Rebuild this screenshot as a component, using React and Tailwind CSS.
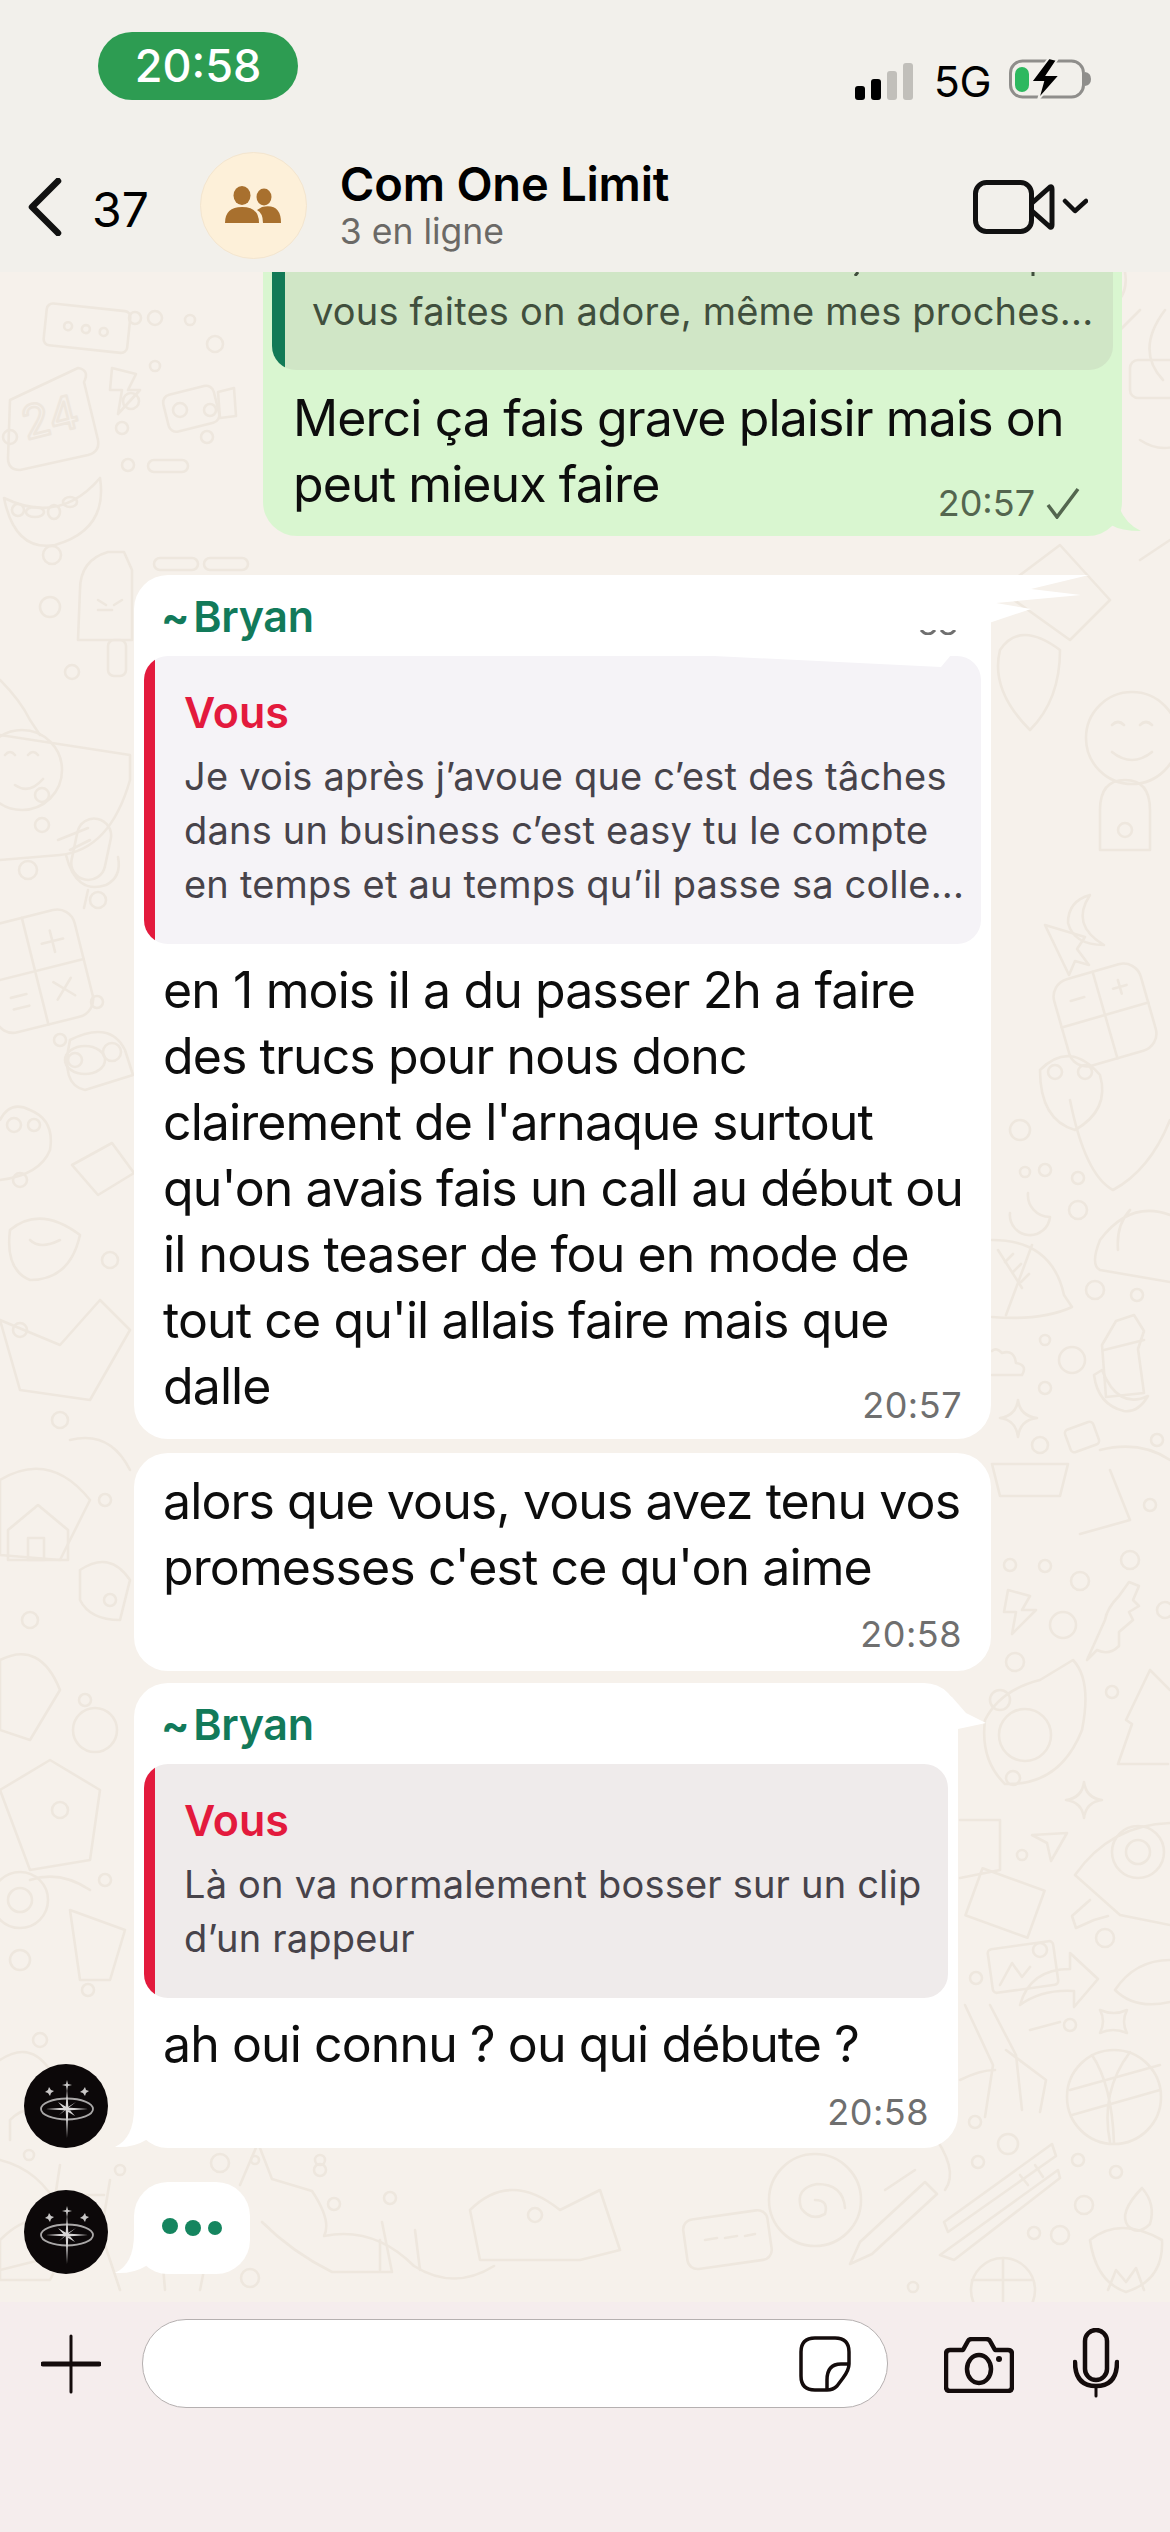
import React from 'react'

const FONT = "font-['Inter','Liberation_Sans',sans-serif]"

// tiny filler circles of the wallpaper, page coordinates
const dots = [
  [135, 318, 6], [155, 318, 7], [215, 344, 8], [190, 320, 5], [155, 366, 5], [128, 465, 6], [131, 401, 8], [122, 428, 6],
  [180, 410, 7], [210, 410, 6], [207, 437, 6], [10, 437, 7], [52, 555, 9], [18, 510, 6], [72, 672, 7], [50, 607, 10],
  [42, 825, 7], [42, 795, 7], [98, 900, 8], [97, 1002, 6], [60, 1040, 6], [28, 870, 9], [112, 1052, 9], [75, 1060, 7],
  [1020, 1130, 10], [1045, 1170, 6], [1025, 1172, 5], [1078, 1178, 6], [1078, 1210, 9], [1095, 1290, 9], [1137, 1295, 6],
  [1045, 1340, 5], [1072, 1360, 13], [1045, 1388, 6], [1040, 1445, 8], [1157, 1440, 6], [1010, 1565, 6], [1045, 1566, 6],
  [1080, 1581, 9], [1063, 1625, 13], [1015, 1662, 9], [1112, 1692, 6], [1000, 1700, 10], [1013, 1778, 7], [1022, 1855, 5],
  [1105, 1938, 9], [976, 1978, 6], [1070, 2025, 6], [975, 2122, 6], [1008, 2144, 10], [978, 2162, 6], [1078, 2160, 6],
  [1116, 2172, 6], [1084, 2205, 9], [1034, 2233, 6], [1060, 2235, 9], [913, 2287, 5], [120, 2170, 5], [29, 2155, 5],
  [320, 2160, 5], [220, 2163, 9], [255, 2160, 4], [320, 2170, 6], [334, 2204, 6], [250, 2278, 9], [390, 2198, 6], [535, 2215, 7],
  [1150, 1505, 6], [1130, 1560, 9], [1165, 1610, 8], [20, 1330, 7], [60, 1420, 8], [105, 1500, 6], [30, 1620, 8], [85, 1700, 6],
  [60, 1810, 8], [105, 1880, 6], [20, 1960, 10], [88, 1990, 6], [40, 2040, 7], [110, 1600, 6], [20, 1180, 7], [110, 1260, 8],
]

function Wallpaper() {
  return (
    <svg className="absolute inset-0 w-full h-full" viewBox="0 272 1170 2030" fill="none" stroke="#eee7de" strokeWidth="2.6" strokeLinejoin="round" strokeLinecap="round">
      {dots.map(([x, y, r], i) => <circle key={i} cx={x} cy={y} r={r} />)}
      {/* left column */}
      <g transform="rotate(6 85 328)"><rect x="45" y="307" width="84" height="42" rx="6" /><circle cx="68" cy="328" r="4" /><circle cx="86" cy="329" r="4" /><circle cx="104" cy="330" r="4" /></g>
      <path d="M10 400 L78 368 Q90 370 84 382 L98 440 Q100 452 88 455 L20 470 Q8 470 8 458z" />
      <text x="22" y="435" fontSize="46" fontFamily="Inter" fill="#f6f1eb" transform="rotate(-14 45 420)">24</text>
      <path d="M112 368l24 6-8 16 12 0-22 24 4-24-12 0z" />
      <rect x="165" y="390" width="52" height="38" rx="8" transform="rotate(-14 190 408)" /><path d="M218 392l16-4 2 28-16 2z" />
      <path d="M4 498 Q60 525 100 478 Q108 530 55 545 Q15 552 4 498z" /><ellipse cx="35" cy="512" rx="9" ry="5" /><ellipse cx="54" cy="512" rx="6" ry="7" /><ellipse cx="70" cy="502" rx="7" ry="5" />
      <rect x="148" y="460" width="40" height="12" rx="6" /><rect x="154" y="558" width="44" height="12" rx="6" /><rect x="204" y="558" width="44" height="12" rx="6" />
      <path d="M80 590 Q80 560 108 552 L124 552 L132 570 L132 640 L78 640z" /><rect x="108" y="640" width="18" height="36" rx="6" /><path d="M98 610h14M98 600l8 5M122 600l-8 5" />
      <path d="M0 680 Q20 700 30 720 L40 735 M0 735 L130 755 L130 780 Q110 850 60 855 L0 860" />
      <circle cx="22" cy="770" r="40" /><path d="M5 755q5-6 10 0M28 755q5-6 10 0M15 785q14 10 28-6" />
      <path d="M58 840l30-12M70 850l20-10" />
      <rect x="74" y="818" width="34" height="62" rx="17" transform="rotate(12 90 850)" /><path d="M66 855q10 40 40 30q16-8 12-28M88 890l-4 18" />
      <g transform="rotate(-14 40 970)"><rect x="-15" y="915" width="100" height="110" rx="18" /><path d="M35 915v110M-15 970h100M48 945h22M59 934v22M50 985l18 18M68 985l-18 18M5 990h16M5 1002h16" /></g>
      <ellipse cx="85" cy="1060" rx="20" ry="14" /><path d="M70 1040 Q110 1020 125 1050 L133 1075 L85 1090 Q60 1085 70 1040z" />
      <path d="M0 1120 Q10 1100 30 1110 Q55 1120 50 1150 Q40 1175 0 1180" /><circle cx="14" cy="1125" r="7" /><circle cx="34" cy="1125" r="6" />
      <path d="M72 1165l40-22 22 30-36 22z" />
      <path d="M10 1230 Q40 1205 80 1235 Q70 1280 30 1280 Q5 1270 10 1230z" /><path d="M30 1240q10 10 30 0" />
      <path d="M0 1320 L60 1345 L100 1300 L130 1330 L90 1400 L20 1390z" />
      <path d="M0 1480 Q50 1450 90 1500 L60 1560 L0 1555z" /><path d="M70 1440 Q110 1430 130 1470" />
      <path d="M8 1530l30-25 30 25v30h-60z" /><rect x="28" y="1538" width="16" height="22" />
      <path d="M80 1570q30-20 50 10l-10 40q-30 0-40-20z" />
      <path d="M0 1660 Q40 1640 60 1690 L30 1740 L0 1730z" /><circle cx="95" cy="1730" r="22" />
      <path d="M0 1790 L50 1760 L100 1790 L90 1860 L30 1870z" /><path d="M30 1880q30-10 60 10" />
      <circle cx="20" cy="1900" r="28" /><circle cx="20" cy="1900" r="12" /><path d="M70 1910 L125 1930 L110 1980 L80 1980z" />
      <path d="M0 2060 Q30 2040 50 2070 M10 2140l0-20q20-20 40 0" /><path d="M0 2160q40 10 60 50l-20 50-40 10" />
      {/* fox and friends under the typing bubble */}
      <path d="M240 2185l18-42 14 36 40 12q20 30 12 45q50-10 90 30q40 25 80 0" /><path d="M262 2222q30 30 70 50h60l-10-50M420 2270l-5-40M380 2270l0-30" />
      <path d="M60 2165l-10 65 50 10 10-60M60 2195h44" />
      <path d="M0 2240q40-40 70 0l-20 40h-50z" /><path d="M120 2290l-20-60M165 2290l-5-60M200 2290l10-50" />
      <rect x="685" y="2215" width="85" height="50" rx="10" transform="rotate(-8 725 2240)" /><path d="M705 2240l12-2M725 2238l12-2M745 2236l10-2" />
      <circle cx="815" cy="2200" r="46" /><path d="M815 2200q14 0 10 14q-14 8-24-6q-6-20 16-24q26 0 28 24" />
      <path d="M925 2182l-65 60-10 22 22-10 65-60z" /><path d="M470 2210 Q510 2170 560 2210 L600 2190 L620 2250 L580 2260 L480 2260z" />
      {/* right column, top */}
      <path d="M1125 272q5 30-25 40M1140 310l-30 30M1165 310q-30 40-2 70" />
      <circle cx="1025" cy="338" r="9" /><rect x="1130" y="360" width="70" height="38" rx="8" /><path d="M1140 440q30 20 60-10" />
      <path d="M1140 560 L1170 540 M1000 590 L1060 545 L1110 600 L1070 640z" />
      <path d="M1000 650 Q1020 620 1060 650 Q1060 700 1030 730 Q990 690 1000 650z" /><circle cx="1132" cy="738" r="46" /><path d="M1112 725q6-6 12 0M1140 725q6-6 12 0M1112 752q20 16 40 0" />
      <path d="M1100 810q0-30 25-30q25 0 25 30v40h-50z" /><circle cx="1125" cy="830" r="7" />
      <path d="M1045 925l40 12-8 12 12 16-14-4-6 14z" /><path d="M1090 895q-20 30 14 50q-30 0-36-22q0-22 22-28z" />
      <g transform="rotate(-16 1105 1015)"><rect x="1060" y="970" width="90" height="90" rx="18" /><path d="M1105 970v90M1060 1015h90M1076 992h14M1120 992h14M1127 985v14" /></g>
      <path d="M1040 1070 Q1070 1040 1100 1075 Q1110 1110 1075 1130 Q1040 1120 1040 1070z" /><circle cx="1055" cy="1072" r="7" /><circle cx="1085" cy="1072" r="7" />
      {/* right column, middle */}
      <path d="M1070 1100 Q1085 1175 1113 1190 Q1150 1170 1170 1120" />
      <path d="M1010 1205a20 20 0 1 0 40 4a22 22 0 0 1-22-24" transform="translate(0 8)" />
      <path d="M992 1240q60 0 72 55l8 12q-30 14-80 10M998 1250l24 38M1032 1245l-26 70" /><path d="M1005 1262l8-8M1013 1272l8-8M1021 1282l8-8" />
      <path d="M1170 1215q-40-15-70 25q-10 25 0 30l70 12M1130 1210q-14 15-12 40" />
      <path d="M992 1375h30q6-10-6-12q-2-14-14-10q-6-6-10-2" />
      <path d="M1102 1345l14-24 18-6 10 16-6 18 6 44-38 4z" /><path d="M1104 1350l40-10" />
      <path d="M1094 1375q4 30 30 36q14 2 24-15q-30 14-46-26z" />
      <path d="M1018 1400q2 16 19 18q-17 2-19 19q-2-17-18-19q16-2 18-18z" />
      <rect x="1067" y="1425" width="30" height="24" rx="4" transform="rotate(-20 1082 1437)" />
      <path d="M992 1464h76l-8 32h-60zM1110 1470l20 50-50 14" /><path d="M1100 1450q40-10 70 10" />
      <path d="M1008 1590l22 6-8 14 14 0-24 24 4-22-12 0z" />
      <path d="M1087 1660l18-40q2-12 14-24l10-14 10 4-6 14 6 6-10 6 4 8-14 12 0 14q-10 10-22 4z" />
      <path d="M1073 1660 Q1092 1680 1082 1730 Q1060 1786 1005 1784 Q980 1760 985 1720 Q1000 1690 1040 1680z" /><circle cx="1025" cy="1735" r="26" />
      <path d="M1150 1670l20 20M1150 1670l-24 50 6 4-14 40 50 0" />
      <path d="M1084 1782q2 16 18 18q-16 2-18 18q-2-16-18-18q16-2 18-18z" />
      <path d="M1075 1875 Q1110 1825 1170 1823 M1170 1925 L1120 1915 L1075 1875" /><circle cx="1138" cy="1852" r="26" /><circle cx="1138" cy="1852" r="12" /><path d="M1090 1900l-18 16 4 12 18-8 14-4" />
      <path d="M960 1820h40l0 50-40 8" /><path d="M1032 1835l35-2-16 28-4-18z" />
      <rect x="972" y="1878" width="66" height="50" transform="rotate(20 1005 1903)" /><rect x="990" y="1945" width="66" height="44" rx="4" transform="rotate(-8 1023 1967)" /><circle cx="1040" cy="1950" r="7" /><path d="M1000 1985l12-22 10 14 8-10" />
      <path d="M1020 2005q10-36 50-36l0-16 28 26-24 28 0-16q-32-2-54 14z" />
      <path d="M1115 1990q20-30 55-30M1115 1990q20 20 55 12" />
      <path d="M1100 2010q14 6 27 0q-6 12 0 23q-14-6-27 0q6-12 0-23z" />
      <path d="M965 2005l28 60-8 52M990 2005l26 50 6 55M1006 2050l40 30-6 32M1030 2030l30-8" /><path d="M960 2080q20-10 35-10" />
      <circle cx="1114" cy="2097" r="47" /><path d="M1070 2090l90-25M1072 2115l88-25M1092 2055q20 30 22 88M1130 2052q-30 40-20 90" />
      <path d="M940 2255l118-85 2 8-106 82zM948 2232l108-76 -4-12-108 78z" /><path d="M1020 2175l8 10M1035 2165l8 12" />
      <path d="M1090 2240q30-24 72 0q2 40-36 52q-30-10-36-52z" /><path d="M1142 2188q-24 25-14 38q10 10 22-2q6-20-8-36z" /><path d="M1108 2290l8-20 10 12 10-14 8 22" />
      <circle cx="1003" cy="2290" r="32" /><path d="M972 2280h60M1003 2258v60" />
      <path d="M930 2130 Q960 2170 945 2190M915 2170l-30 20" />
    </svg>
  )
}

function Tail({ className, fill = 'white', d }) {
  return (
    <svg className={`absolute ${className}`} viewBox="0 0 40 40" fill={fill}><path d={d} /></svg>
  )
}

function Reply({ text, bg, height }) {
  return (
    <div className={`flex overflow-hidden rounded-[24px] ${bg} ${height}`}>
      <div className="w-[11px] bg-[#e31a3d] shrink-0"></div>
      <div className="pl-[29px] pt-[29px]">
        <div className="text-[43px] leading-[54px] font-semibold text-[#e31a3d]">Vous</div>
        <div className="mt-[10px] text-[38px] leading-[54px] tracking-[0.2px] text-[#47434a] whitespace-nowrap">{text}</div>
      </div>
    </div>
  )
}

function Name() {
  return <div className="pl-[27px] h-[62px] text-[43px] leading-[44px] font-semibold tracking-[-0.3px] text-[#127a5a]"><span className="text-[42px] font-bold mr-[4px]">~</span>Bryan</div>
}

function Time({ children }) {
  return <span className="text-[36px] leading-[40px] tracking-[0.5px] text-[#6f6f6f]">{children}</span>
}

function Avatar() {
  return (
    <svg className="w-[84px] h-[84px] shrink-0" viewBox="0 0 84 84" fill="none">
      <circle cx="42" cy="42" r="42" fill="#0c0809" />
      <ellipse cx="43" cy="45" rx="26" ry="10.5" stroke="#a9a7a7" strokeWidth="1.8" />
      <path d="M43 24l1.4 20 -1.4 30 -1.4-30zM22 45l21-1.6 21 1.6-21 1.6zM34 38l10 6 7 8-10-6zM52 38l-9 7-8 6 9-8z" fill="#d8d6d6" />
      <path d="M43 16l1 4 4 1-4 1-1 5-1-5-4-1 4-1zM25 23l2 3 3 1-3 2-1 3-2-3-3-1 3-2zM61 23l1 3 3 1-3 2-1 3-2-3-3-1 3-2z" fill="#c9c7c7" />
    </svg>
  )
}

function Bubble({ avatar, width, className = '', children, tail }) {
  return (
    <div className="flex items-end pl-[24px]">
      {avatar ? <Avatar /> : <div className="w-[84px] shrink-0"></div>}
      <div className={`relative ml-[26px] ${width} bg-white rounded-[34px] ${className}`}>
        {tail && <Tail className="-left-[19px] bottom-0 w-[40px] h-[40px]" d="M19 0 Q19 30 0 39 Q18 40 31 32 L40 10z" />}
        {children}
      </div>
    </div>
  )
}

const BODY = 'text-[50px] leading-[66px] tracking-[-0.9px] text-[#0d0d0d] whitespace-nowrap'

export default function App() {
  return (
    <div className={`w-[1170px] h-[2532px] flex flex-col overflow-hidden text-black ${FONT}`}>
      {/* status bar and conversation header */}
      <header className="h-[272px] shrink-0 bg-[#f2f0eb] flex flex-col">
        <div className="h-[140px] flex items-start pl-[98px] pr-[77px]">
          <div className="mt-[32px] w-[200px] h-[68px] rounded-[34px] bg-[#2d9c52] text-white text-[45px] font-medium flex items-center justify-center">20:58</div>
          <div className="ml-auto mt-[58px] flex items-end">
            <div className="flex items-end gap-[6px] h-[38px]">
              <div className="w-[10px] h-[14px] rounded-[3px] bg-black"></div>
              <div className="w-[10px] h-[21px] rounded-[3px] bg-black"></div>
              <div className="w-[10px] h-[29px] rounded-[3px] bg-[#c1bfba]"></div>
              <div className="w-[10px] h-[37px] rounded-[3px] bg-[#c1bfba]"></div>
            </div>
            <span className="ml-[21px] text-[43px] leading-[38px] tracking-[-0.5px]">5G</span>
            <svg className="ml-[18px] w-[84px] h-[42px]" viewBox="0 0 84 42" fill="none">
              <rect x="1.5" y="3" width="73" height="36" rx="12" stroke="#8f8e8b" strokeWidth="3" />
              <rect x="6" y="9" width="14" height="25" rx="7" fill="#2db85f" />
              <path d="M76 14q6 1 6 7t-6 7z" fill="#8f8e8b" />
              <path d="M40 0 L22 24 L34 24 L29 42 L51 17 L38 17 L48 2z" fill="black" stroke="#f2f0eb" strokeWidth="2" />
            </svg>
          </div>
        </div>
        <div className="h-[132px] flex items-start pl-[28px] pr-[82px]">
          <svg className="mt-[38px] w-[34px] h-[58px]" viewBox="0 0 34 58" fill="none" stroke="#111" strokeWidth="6.5" strokeLinecap="round" strokeLinejoin="round"><path d="M30 3 L4 29 L30 55" /></svg>
          <span className="ml-[30px] mt-[41px] text-[48px] leading-[58px]">37</span>
          <div className="ml-[51px] mt-[12px] w-[107px] h-[107px] rounded-full bg-[#fdf0d9] border border-[#f3e5cf] flex items-center justify-center">
            <svg className="w-[56px] h-[38px] mb-[2px]" viewBox="0 0 56 38" fill="#a8702e">
              <ellipse cx="39" cy="11" rx="7.5" ry="8.5" /><path d="M37 21q19-4 19 16H38q0-10-6-13z" />
              <ellipse cx="17" cy="9.5" rx="8.5" ry="9.5" /><path d="M0 37q0-16 17-16t17 16z" />
            </svg>
          </div>
          <div className="ml-[33px] mt-[18px]">
            <div className="text-[47px] leading-[52px] font-semibold tracking-[-0.2px]">Com One Limit</div>
            <div className="text-[35.5px] leading-[44px] text-[#6b6966]">3 en ligne</div>
          </div>
          <svg className="ml-auto mt-[40px] w-[115px] h-[54px]" viewBox="0 0 115 54" fill="none" stroke="#111" strokeLinejoin="round" strokeLinecap="round">
            <rect x="2.5" y="2.5" width="56" height="49" rx="11" strokeWidth="5" />
            <path d="M59 23 L77 7 Q79 6 79 9 V45 Q79 48 77 47 L59 31" strokeWidth="5" />
            <path d="M92 21 L102 31 L113 21" strokeWidth="4.5" />
          </svg>
        </div>
      </header>

      {/* messages */}
      <main className="relative flex-1 bg-[#f6f1eb] overflow-hidden">
        <Wallpaper />
        <div className="relative flex flex-col">
          {/* outgoing */}
          <div className="relative self-end mr-[48px] w-[859px] h-[264px] bg-[#d9f6d0] rounded-b-[34px] px-[9px]">
            <Tail className="-right-[19px] bottom-0 w-[40px] h-[50px]" fill="#d9f6d0" d="M0 0 L14 0 Q18 30 40 40 Q20 40 10 34 Q4 40 0 40z" />
            <div className="flex h-[98px] rounded-b-[24px] overflow-hidden bg-[#d0e6c6]">
              <div className="w-[13px] bg-[#127a56] shrink-0"></div>
              <div className="relative pl-[27px] pt-[12px] text-[38px] leading-[54px] tracking-[0.2px] text-[#404f3d] whitespace-nowrap">
                vous faites on adore, même mes proches...
                <svg className="absolute top-0 left-[0px] w-[800px] h-[4px]" viewBox="0 0 800 4" stroke="#404f3d" strokeWidth="3"><path d="M570 4l3-4M748 0v4" /></svg>
              </div>
            </div>
            <div className={`pl-[21px] pr-[14px] pt-[15px] ${BODY}`}>
              Merci ça fais grave plaisir mais on
              <div className="flex items-end justify-between">
                <span>peut mieux faire</span>
                <span className="flex items-center gap-[10px] mb-[-6px] mr-[18px] tracking-normal">
                  <span className="text-[36px] leading-[40px] text-[#54664f]">20:57</span>
                  <svg className="w-[36px] h-[32px]" viewBox="0 0 36 32" fill="none" stroke="#54664f" strokeWidth="3.5"><path d="M3 18 L12 30 L33 2" /></svg>
                </span>
              </div>
            </div>
          </div>

          {/* first quoted reply */}
          <div className="mt-[39px]">
            <Bubble width="w-[857px]" className="h-[864px] pt-[19px]">
              <Name />
              <div className="px-[10px]">
                <Reply bg="bg-[#f5f3f7]" height="h-[288px]" text={<>Je vois après j’avoue que c’est des tâches<br />dans un business c’est easy tu le compte<br />en temps et au temps qu’il passe sa colle...</>} />
              </div>
              <div className={`pl-[29px] pt-[13px] ${BODY}`}>
                en 1 mois il a du passer 2h a faire<br />
                des trucs pour nous donc<br />
                clairement de l'arnaque surtout<br />
                qu'on avais fais un call au début ou<br />
                il nous teaser de fou en mode de<br />
                tout ce qu'il allais faire mais que<br />
                dalle
              </div>
              <div className="flex justify-end pr-[29px] -mt-[34px]"><Time>20:57</Time></div>
              {/* retouched smear across the corner */}
              <svg className="absolute -right-[100px] top-0 w-[460px] h-[95px]" viewBox="0 0 460 95" fill="white">
                <path d="M100 0 L458 0 L400 14 L450 20 L365 28 L400 34 L358 48 L358 56 L100 62z" />
                <path d="M63 80 L320 80 L310 92z" />
              </svg>
              <div className="absolute right-[32px] top-[55px] w-[40px] h-[5px] text-[#6f6f6f] overflow-hidden">
                <svg viewBox="0 0 40 5" fill="none" stroke="currentColor" strokeWidth="3"><path d="M2 0q7 8 14 0M22 0q7 8 14 0" /></svg>
              </div>
            </Bubble>
          </div>

          {/* second message */}
          <div className="mt-[14px]">
            <Bubble width="w-[857px]" className="h-[218px] pt-[15px]">
              <div className={`pl-[29px] ${BODY}`}>
                alors que vous, vous avez tenu vos<br />
                promesses c'est ce qu'on aime
              </div>
              <div className="flex justify-end pr-[29px] mt-[14px]"><Time>20:58</Time></div>
            </Bubble>
          </div>

          {/* last quoted reply */}
          <div className="mt-[12px]">
            <Bubble avatar tail width="w-[824px]" className="h-[465px] pt-[19px]">
              <Name />
              <div className="px-[10px] pt-[18px]"></div>
              <div className="px-[10px] -mt-[18px]">
                <Reply bg="bg-[#efebeb]" height="h-[234px]" text={<>Là on va normalement bosser sur un clip<br />d’un rappeur</>} />
              </div>
              <div className={`pl-[29px] pt-[13px] ${BODY}`}>ah oui connu ? ou qui débute ?</div>
              <div className="flex justify-end pr-[29px] mt-[15px]"><Time>20:58</Time></div>
              <svg className="absolute -right-[64px] top-0 w-[100px] h-[62px]" viewBox="0 0 100 62" fill="white"><path d="M0 0 L30 14 L44 30 L64 40 L36 46 L34 54 L0 60z" /></svg>
            </Bubble>
          </div>

          {/* typing */}
          <div className="mt-[34px]">
            <Bubble avatar tail width="w-[116px]" className="h-[92px] flex items-center justify-center gap-[7px]">
              <div className="w-[16px] h-[16px] rounded-full bg-[#15855f] -mt-[4px]"></div>
              <div className="w-[16px] h-[16px] rounded-full bg-[#15855f]"></div>
              <div className="w-[14px] h-[14px] rounded-full bg-[#15855f]"></div>
            </Bubble>
          </div>
        </div>
      </main>

      {/* composer */}
      <footer className="h-[230px] shrink-0 bg-[#f5eded] flex items-start pl-[41px]">
        <svg className="mt-[32px] w-[60px] h-[60px]" viewBox="0 0 60 60" fill="none" stroke="#140c0c" strokeLinecap="round"><path d="M30 2v56" strokeWidth="3" /><path d="M2 30h56" strokeWidth="5" /></svg>
        <div className="ml-[41px] mt-[17px] w-[746px] h-[89px] bg-white border border-[#b5b0b0] rounded-[44px] flex items-center justify-end pr-[36px]">
          <svg className="w-[52px] h-[56px]" viewBox="0 0 52 56" fill="none" stroke="#140c0c" strokeWidth="3.5" strokeLinejoin="round">
            <path d="M16 2 H36 Q50 2 50 16 V28 Q50 34 44 42 L38 50 Q34 54 28 54 H16 Q2 54 2 40 V16 Q2 2 16 2z" />
            <path d="M50 28 H42 Q28 28 28 44 V54" />
          </svg>
        </div>
        <svg className="ml-[56px] mt-[35px] w-[70px] h-[56px]" viewBox="0 0 70 56" fill="none" stroke="#140c0c" strokeWidth="4.5" strokeLinejoin="round">
          <path d="M6 13 H19 L24 4 Q25 2 28 2 H42 Q45 2 46 4 L51 13 H64 Q68 13 68 17 V50 Q68 54 64 54 H6 Q2 54 2 50 V17 Q2 13 6 13z" />
          <ellipse cx="35" cy="32" rx="12" ry="14" />
          <circle cx="55" cy="22" r="3" fill="#140c0c" stroke="none" />
        </svg>
        <svg className="ml-[59px] mt-[26px] w-[46px] h-[70px]" viewBox="0 0 46 70" fill="none" stroke="#140c0c" strokeWidth="4.5" strokeLinecap="round">
          <rect x="12" y="2" width="22" height="50" rx="11" />
          <path d="M2 34 Q2 58 23 58 Q44 58 44 34" /><path d="M23 58 V68" strokeWidth="3" />
        </svg>
      </footer>
    </div>
  )
}
